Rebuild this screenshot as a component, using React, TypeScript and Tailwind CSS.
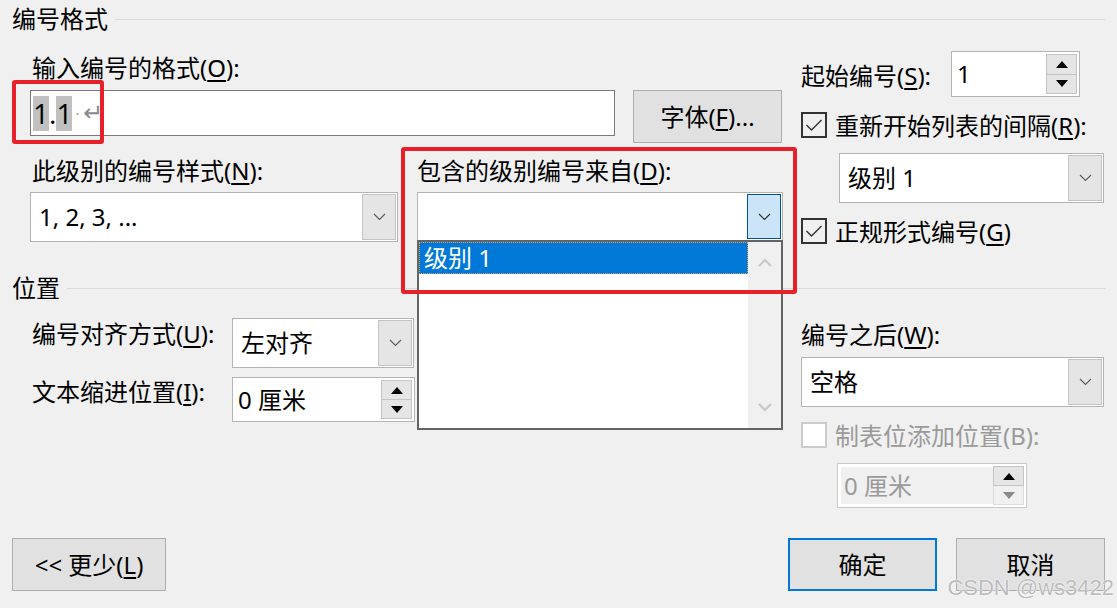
import React from "react";

const FONT = "[font-family:'Noto_Sans','Noto_Sans_CJK_SC',sans-serif]";

function Chevron({ color = "#5a5a5a" }: { color?: string }) {
  return (
    <svg width="13" height="8" viewBox="0 0 13 8">
      <polyline points="1,1 6.5,6.5 12,1" fill="none" stroke={color} strokeWidth="1.1" />
    </svg>
  );
}

function Tri({ up, color = "#000" }: { up?: boolean; color?: string }) {
  return (
    <svg width="12" height="7" viewBox="0 0 12 7">
      <polygon points={up ? "0,7 12,7 6,0" : "0,0 12,0 6,7"} fill={color} />
    </svg>
  );
}

function Combo({ value, className, active }: { value: string; className: string; active?: boolean }) {
  return (
    <div className={`flex border border-[#b4b4b4] bg-white ${className}`}>
      <div className="flex flex-1 items-center pl-[8px] leading-none">{value}</div>
      <div
        className={`m-[1px] flex w-[34px] items-center justify-center border ${
          active ? "border-[#005499] bg-[#cce4f7]" : "border-[#c4c4c4] bg-[#e5e5e5]"
        }`}
      >
        <Chevron color={active ? "#2b2b2b" : "#5a5a5a"} />
      </div>
    </div>
  );
}

function Spin({ value, className, disabled }: { value: string; className: string; disabled?: boolean }) {
  return (
    <div className={`flex border ${disabled ? "border-[#c8c8c8] bg-white" : "border-[#b4b4b4] bg-white"} ${className}`}>
      <div
        className={`flex flex-1 items-center leading-none ${
          disabled ? "my-[3px] ml-[3px] bg-[#f0f0f0] pl-[3px] text-[#9a9a9a]" : "pl-[5px]"
        }`}
      >
        {value}
      </div>
      <div className="my-[2px] mr-[2px] flex w-[31px] flex-col">
        <div className="flex flex-1 items-center justify-center border border-[#c4c4c4] bg-[#e5e5e5]">
          <Tri up />
        </div>
        <div
          className={`flex flex-1 items-center justify-center border border-t-0 ${
            disabled ? "border-[#dcdcdc] bg-[#f0f0f0]" : "border-[#c4c4c4] bg-[#e5e5e5]"
          }`}
        >
          <Tri color={disabled ? "#8a8a8a" : "#000"} />
        </div>
      </div>
    </div>
  );
}

function Check({ checked, disabled }: { checked?: boolean; disabled?: boolean }) {
  return (
    <div
      className={`flex h-[26px] w-[26px] items-center justify-center border-2 ${
        disabled ? "border-[#cccccc] bg-white" : "border-[#333333] bg-[#f0f0f0]"
      }`}
    >
      {checked && (
        <svg width="18" height="14" viewBox="0 0 18 14">
          <polyline points="1.5,7 6.5,12 16.5,2" fill="none" stroke="#333" strokeWidth="1.4" />
        </svg>
      )}
    </div>
  );
}

function Header({ title }: { title: string }) {
  return (
    <div className="flex h-[24px] items-center leading-none">
      <span>{title}</span>
      <div className="ml-[7px] h-0 flex-1 border-t border-[#d9d9d9]" />
    </div>
  );
}

function Label({ text, k, tail = "):", className = "" }: { text: string; k: string; tail?: string; className?: string }) {
  return (
    <div className={`h-[24px] leading-none whitespace-nowrap ${className}`}>
      {text}(<u className="underline-offset-[3px]">{k}</u>
      {tail}
    </div>
  );
}

function Button({ children, className }: { children: React.ReactNode; className: string }) {
  return (
    <div className={`flex h-[53px] items-center justify-center bg-[#e1e1e1] leading-none ${className}`}>
      {children}
    </div>
  );
}

export default function App() {
  return (
    <div className={`relative h-[608px] w-[1117px] overflow-hidden bg-[#f0f0f0] text-[24px] text-black ${FONT}`}>
      <div className="px-[12px] pt-[7px]">
        <Header title="编号格式" />

        <div className="mt-[20px] flex items-start">
          <div className="w-[771px] pl-[18px]">
            <Label text="输入编号的格式" k="O" className="mt-[5px] pl-[2px]" />
            <div className="mt-[10px] flex items-start">
              <div className="flex h-[46px] w-[585px] items-center border border-[#7a7a7a] bg-white pl-[2px] text-[28px] leading-[35px] [font-family:'Open_Sans',sans-serif]">
                <span className="bg-[#c0c0c0]">1</span>
                <span>.</span>
                <span className="bg-[#c0c0c0]">1</span>
                <span className="ml-[3px] text-[14px] text-[#8a8a8a]">·</span>
                <span className="ml-[4px] text-[24px] text-[#8a8a8a] [font-family:'DejaVu_Sans',sans-serif]">↵</span>
              </div>
              <Button className="ml-[18px] h-[52px] w-[149px] border border-[#adadad]">
                字体(<u className="underline-offset-[3px]">F</u>)...
              </Button>
            </div>
            <div className="mt-[16px] flex items-start">
              <div className="w-[368px]">
                <Label text="此级别的编号样式" k="N" className="pl-[2px]" />
                <Combo value="1, 2, 3, ..." className="mt-[9px] h-[50px]" />
              </div>
              <div className="ml-[19px] w-[366px]">
                <Label text="包含的级别编号来自" k="D" />
                <div className="relative mt-[9px]">
                  <Combo value="" active className="h-[49px]" />
                  <div className="absolute left-0 top-[48px] z-10 flex h-[190px] w-[366px] border-2 border-[#646464] bg-white">
                    <div className="flex-1">
                      <div className="flex h-[32px] items-center border border-dotted border-[#e0a060] bg-[#0078d7] pl-[4px] leading-none text-white">
                        级别 1
                      </div>
                    </div>
                    <div className="flex w-[33px] flex-col items-center justify-between bg-[#f0f0f0] py-[16px]">
                      <svg width="16" height="10" viewBox="0 0 16 10">
                        <polyline points="2,8 8,2 14,8" fill="none" stroke="#c8c8c8" strokeWidth="2.2" />
                      </svg>
                      <svg width="16" height="10" viewBox="0 0 16 10">
                        <polyline points="2,2 8,8 14,2" fill="none" stroke="#c8c8c8" strokeWidth="2.2" />
                      </svg>
                    </div>
                  </div>
                </div>
              </div>
            </div>
          </div>

          <div className="ml-[18px] w-[304px]">
            <div className="flex h-[46px] items-center">
              <Label text="起始编号" k="S" className="mt-[3px] w-[150px]" />
              <Spin value="1" className="h-[46px] w-[129px]" />
            </div>
            <div className="mt-[15px] flex h-[26px] items-center">
              <Check checked />
              <Label text="重新开始列表的间隔" k="R" className="ml-[8px] mt-[2px]" />
            </div>
            <Combo value="级别 1" className="ml-[38px] mt-[15px] h-[50px] w-[265px]" />
            <div className="mt-[15px] flex h-[26px] items-center">
              <Check checked />
              <Label text="正规形式编号" k="G" tail=")" className="ml-[8px] mt-[2px]" />
            </div>
          </div>
        </div>

        <div className="mt-[32px]">
          <Header title="位置" />
        </div>

        <div className="mt-[18px] flex items-start">
          <div className="w-[771px] pl-[20px]">
            <div className="flex h-[50px] items-start">
              <Label text="编号对齐方式" k="U" className="mt-[4px] w-[200px]" />
              <Combo value="左对齐" className="h-[50px] w-[182px]" />
            </div>
            <div className="mt-[9px] flex h-[45px] items-start">
              <Label text="文本缩进位置" k="I" className="mt-[3px] w-[200px]" />
              <Spin value="0 厘米" className="h-[45px] w-[183px]" />
            </div>
          </div>
          <div className="ml-[18px] w-[304px]">
            <Label text="编号之后" k="W" className="mt-[5px]" />
            <Combo value="空格" className="mt-[10px] h-[50px] w-[303px]" />
            <div className="mt-[16px] flex h-[24px] items-center">
              <Check disabled />
              <span className="ml-[8px] mt-[2px] leading-none text-[#9a9a9a]">制表位添加位置(B):</span>
            </div>
            <Spin value="0 厘米" disabled className="ml-[36px] mt-[16px] h-[45px] w-[190px]" />
          </div>
        </div>

        <div className="mt-[30px] flex items-start justify-between">
          <Button className="w-[154px] border border-[#adadad]">
            &lt;&lt; 更少(<u className="underline-offset-[3px]">L</u>)
          </Button>
          <div className="flex gap-[19px]">
            <Button className="w-[149px] border-2 border-[#0078d7]">确定</Button>
            <Button className="w-[149px] border border-[#adadad]">取消</Button>
          </div>
        </div>
      </div>

      <div className="pointer-events-none absolute left-[12px] top-[80px] h-[64px] w-[92px] rounded-[3px] border-4 border-[#e8202a]" />
      <div className="pointer-events-none absolute left-[401px] top-[147px] z-20 h-[147px] w-[396px] rounded-[3px] border-4 border-[#e8202a]" />

      <div className="absolute bottom-[9px] right-[3px] text-[22px] leading-none text-[#bcbcbc] [font-family:'Liberation_Sans',sans-serif] [text-shadow:0_0_2px_#fff,0_0_1px_#fff]">
        CSDN @ws3422
      </div>
    </div>
  );
}
